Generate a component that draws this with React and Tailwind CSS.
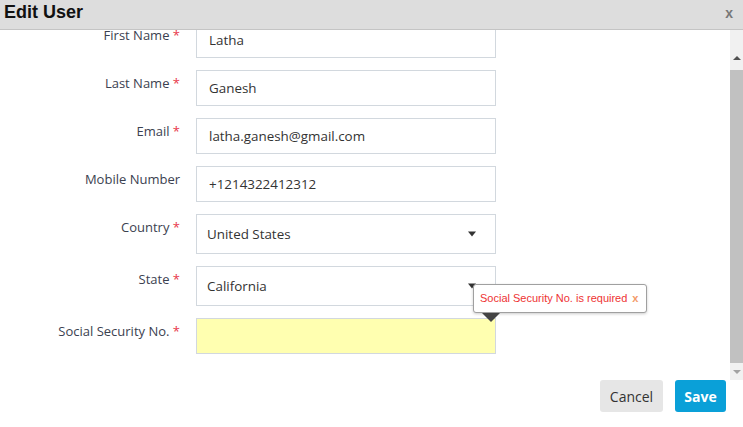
import React from "react";

const Caret = () => (
  <span className="absolute right-[20px] top-1/2 -translate-y-1/2 w-0 h-0 border-l-[4px] border-r-[4px] border-t-[5px] border-l-transparent border-r-transparent border-t-[#333]" />
);

function Row({ label, required, children, mt = "mt-[12px]", labelCls = "pt-[4px] leading-[18px]" }) {
  return (
    <div className={`flex ${mt}`}>
      <div className={`w-[180px] text-right text-[13px] text-[#3b4150] ${labelCls}`}>
        {label}
        {required && <span className="text-[#e8374a]"> *</span>}
        {!required && <span className="invisible"> </span>}
      </div>
      <div className="ml-[16px] w-[300px] relative">{children}</div>
    </div>
  );
}

const inputCls =
  "h-[36px] w-full border border-[#d2d8de] bg-white pl-[12px] flex items-center text-[13.4px] text-[#333]";

export default function App() {
  return (
    <div
      className="w-[743px] h-[427px] bg-white flex flex-col overflow-hidden"
      style={{ fontFamily: '"Open Sans", "Noto Sans", sans-serif' }}
    >
      <div
        className="h-[30px] bg-[#dddddd] border-b border-[#c4c4c4] flex items-center justify-between pl-[4px] pr-[10px] shrink-0 relative z-10"
        style={{ fontFamily: '"Liberation Sans", Arial, sans-serif' }}
      >
        <span className="text-[18px] font-bold text-[#111] leading-none -mt-[6px]">Edit User</span>
        <span className="text-[14px] font-bold text-[#777] -mt-[2px]">x</span>
      </div>
      <div className="flex h-[350px] shrink-0">
        <div className="flex-1 overflow-hidden relative">
          <div className="-mt-[8px]">
            <Row label="First Name" required mt="mt-0" labelCls="pt-[8px] leading-[10px]">
              <div className={inputCls}>Latha</div>
            </Row>
            <Row label="Last Name" required>
              <div className={inputCls}>Ganesh</div>
            </Row>
            <Row label="Email" required>
              <div className={inputCls}>latha.ganesh@gmail.com</div>
            </Row>
            <Row label="Mobile Number">
              <div className={inputCls}>+1214322412312</div>
            </Row>
            <Row label="Country" required>
              <div className={inputCls + " !h-[40px] !pl-[10px]"}>United States</div>
              <Caret />
            </Row>
            <Row label="State" required>
              <div className={inputCls + " !h-[40px] !pl-[10px]"}>California</div>
              <Caret />
            </Row>
            <Row label="Social Security No." required>
              <div className="h-[36px] w-full border border-[#d2d8de] bg-[#ffffb0]" />
              <div
                className="absolute left-[277px] -top-[34px] z-20 h-[29px] pl-[6px] pr-[8px] flex items-center bg-white border border-[#a0a0a0] rounded-[3px] shadow-[0_1px_3px_rgba(0,0,0,0.2)] whitespace-nowrap text-[11px] text-[#ee3333]"
                style={{ fontFamily: '"Liberation Sans", Arial, sans-serif' }}
              >
                Social Security No. is required
                <span className="ml-[5px] text-[#f39a6a] font-bold">x</span>
                <span className="absolute left-[8px] top-[28px] w-0 h-0 border-l-[9px] border-r-[9px] border-t-[9px] border-l-transparent border-r-transparent border-t-[#444]" />
              </div>
            </Row>
          </div>
        </div>
        <div className="w-[13px] bg-[#f1f1f1] flex flex-col items-center shrink-0">
          <div className="h-[40px] flex items-center justify-center">
            <span className="w-0 h-0 border-l-[4px] border-r-[4px] border-b-[4px] border-l-transparent border-r-transparent border-b-[#505050] mt-[16px]" />
          </div>
          <div className="w-full h-[293px] bg-[#c1c1c1]" />
          <div className="flex-1 flex items-center justify-center">
            <span className="w-0 h-0 border-l-[4px] border-r-[4px] border-t-[4px] border-l-transparent border-r-transparent border-t-[#a3a3a3]" />
          </div>
        </div>
      </div>
      <div className="flex justify-end gap-[12px] pr-[17px] pt-0">
        <button className="h-[32px] w-[63px] bg-[#e6e6e6] rounded-[3px] text-[14px] text-[#333]">
          Cancel
        </button>
        <button className="h-[32px] w-[51px] bg-[#0aa0d8] rounded-[3px] text-[14px] font-bold text-white">
          Save
        </button>
      </div>
    </div>
  );
}
